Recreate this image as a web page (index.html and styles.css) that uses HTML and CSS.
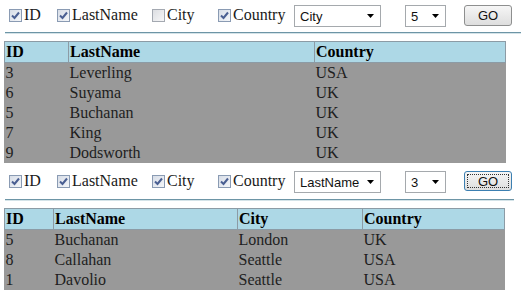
FILE: index.html
```html
<!DOCTYPE html>
<html lang="en">
<head>
    <meta charset="UTF-8">
    <title>Employees</title>
    <link rel="stylesheet" href="styles.css">
</head>
<body>
    <div class="panel">
        <div class="controls">
            <label class="opt opt-id"><span class="cb on"><svg width="11" height="11" viewBox="0 0 11 11"><path d="M2 5.5 L4.5 8 L9 2.5" /></svg></span>ID</label>
            <label class="opt opt-last"><span class="cb on"><svg width="11" height="11" viewBox="0 0 11 11"><path d="M2 5.5 L4.5 8 L9 2.5" /></svg></span>LastName</label>
            <label class="opt opt-city"><span class="cb"></span>City</label>
            <label class="opt opt-country"><span class="cb on"><svg width="11" height="11" viewBox="0 0 11 11"><path d="M2 5.5 L4.5 8 L9 2.5" /></svg></span>Country</label>
            <div class="pick pick-sort"><span>City</span><svg width="7" height="4" viewBox="0 0 7 4"><polygon points="0,0 7,0 3.5,4" /></svg></div>
            <div class="pick pick-count"><span>5</span><svg width="7" height="4" viewBox="0 0 7 4"><polygon points="0,0 7,0 3.5,4" /></svg></div>
            <button class="go">GO</button>
        </div>
        <div class="rule"></div>
        <table class="grid">
            <colgroup><col style="width:64px"><col style="width:246px"><col style="width:191px"></colgroup>
            <tr><th>ID</th><th>LastName</th><th>Country</th></tr>
            <tr><td>3</td><td>Leverling</td><td>USA</td></tr>
            <tr><td>6</td><td>Suyama</td><td>UK</td></tr>
            <tr><td>5</td><td>Buchanan</td><td>UK</td></tr>
            <tr><td>7</td><td>King</td><td>UK</td></tr>
            <tr><td>9</td><td>Dodsworth</td><td>UK</td></tr>
        </table>
    </div>

    <div class="panel">
        <div class="controls">
            <label class="opt opt-id"><span class="cb on"><svg width="11" height="11" viewBox="0 0 11 11"><path d="M2 5.5 L4.5 8 L9 2.5" /></svg></span>ID</label>
            <label class="opt opt-last"><span class="cb on"><svg width="11" height="11" viewBox="0 0 11 11"><path d="M2 5.5 L4.5 8 L9 2.5" /></svg></span>LastName</label>
            <label class="opt opt-city"><span class="cb on"><svg width="11" height="11" viewBox="0 0 11 11"><path d="M2 5.5 L4.5 8 L9 2.5" /></svg></span>City</label>
            <label class="opt opt-country"><span class="cb on"><svg width="11" height="11" viewBox="0 0 11 11"><path d="M2 5.5 L4.5 8 L9 2.5" /></svg></span>Country</label>
            <div class="pick pick-sort"><span>LastName</span><svg width="7" height="4" viewBox="0 0 7 4"><polygon points="0,0 7,0 3.5,4" /></svg></div>
            <div class="pick pick-count"><span>3</span><svg width="7" height="4" viewBox="0 0 7 4"><polygon points="0,0 7,0 3.5,4" /></svg></div>
            <button class="go focused">GO</button>
        </div>
        <div class="rule"></div>
        <table class="grid">
            <colgroup><col style="width:49px"><col style="width:184px"><col style="width:125px"><col style="width:142px"></colgroup>
            <tr><th>ID</th><th>LastName</th><th>City</th><th>Country</th></tr>
            <tr><td>5</td><td>Buchanan</td><td>London</td><td>UK</td></tr>
            <tr><td>8</td><td>Callahan</td><td>Seattle</td><td>USA</td></tr>
            <tr><td>1</td><td>Davolio</td><td>Seattle</td><td>USA</td></tr>
        </table>
    </div>
</body>
</html>
```

FILE: styles.css
```css
body {
    margin: 0;
    padding: 3px 0 0 4px;
    font-family: "Liberation Serif", "Times New Roman", serif;
    font-size: 16px;
    color: #1a1a1a;
    background-color: white;
}
.panel + .panel {
    margin-top: 6px;
}
.panel + .panel .rule {
    margin-top: 6px;
    margin-right: 7px;
}
.controls {
    display: flex;
    align-items: center;
    height: 24px;
    padding-left: 5px;
}
.opt {
    display: flex;
    align-items: center;
    flex: none;
}
.opt-id { width: 48px; }
.opt-last { width: 95px; }
.opt-city { width: 66px; }
.opt-country { width: 76px; }
.cb {
    flex: none;
    width: 11px;
    height: 11px;
    margin-right: 2px;
    border: 1px solid #a4a9b1;
    background: linear-gradient(135deg, #dcdee2, #f7f7f8);
    display: flex;
}
.cb.on {
    border-color: #8a9bb3;
    background: linear-gradient(135deg, #d7dde7, #f4f6f9);
}
.cb path {
    fill: none;
    stroke: #4a5f92;
    stroke-width: 2;
}
.pick {
    flex: none;
    height: 20px;
    border: 1px solid #a5a9ad;
    background-color: white;
    display: flex;
    align-items: center;
    justify-content: space-between;
    padding: 0 6px 0 5px;
    font-family: "Liberation Sans", Arial, sans-serif;
    font-size: 13px;
    color: #111;
    margin-top: 2px;
}
.pick polygon {
    fill: #000;
}
.pick-sort {
    width: 74px;
    margin-right: 24px;
}
.pick-count {
    width: 28px;
    margin-right: 18px;
}
.go {
    width: 48px;
    height: 21px;
    padding: 0;
    border: 1px solid #8e8f8f;
    border-radius: 3px;
    background: linear-gradient(#f6f6f6, #dedede);
    font-family: "Liberation Sans", Arial, sans-serif;
    font-size: 13px;
    color: #111;
}
.go.focused {
    border-color: #3c7fb1;
    outline: 1px dotted #333;
    outline-offset: -4px;
    height: 20px;
}
.rule {
    margin: 5px 0 0 1px;
    border-top: 1px solid #6d95a6;
    border-bottom: 1px solid #d4e3e8;
}
.grid {
    margin-top: 7px;
    border-collapse: collapse;
    table-layout: fixed;
    background-color: #999999;
}
.grid th {
    background-color: #add8e6;
    border: 1px solid #8c9ba5;
    text-align: left;
    padding: 0 1px;
    height: 20px;
    color: #000;
}
.grid td {
    padding: 1px 1px;
    color: #1e1e1e;
}
```
